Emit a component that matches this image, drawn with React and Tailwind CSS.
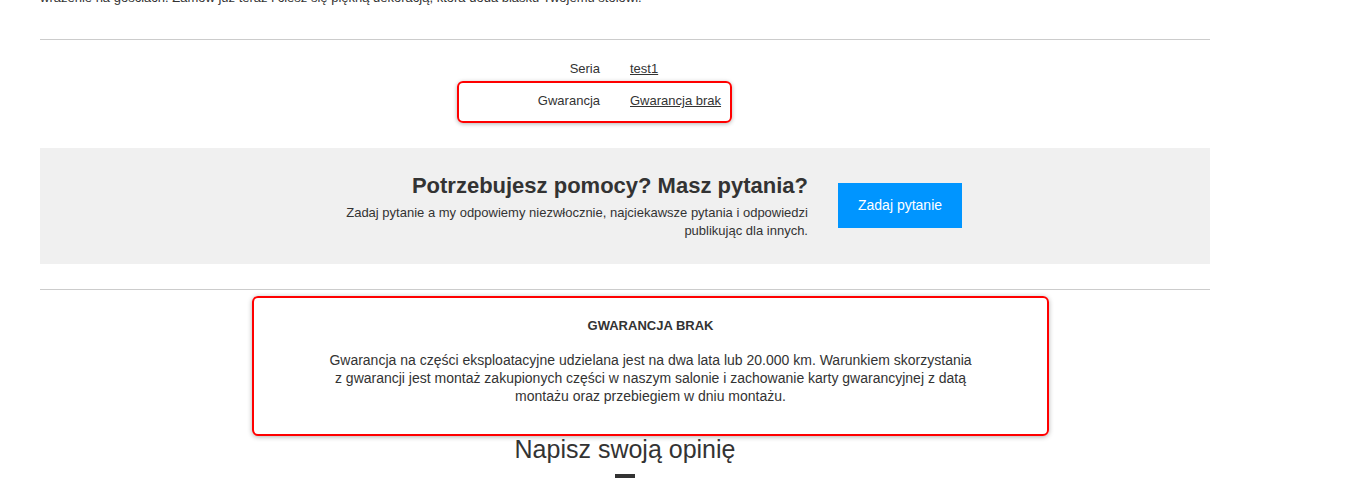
export default function App() {
  return (
    <div className="w-[1346px] h-[494px] overflow-hidden bg-white text-[#333] font-[family-name:Liberation_Sans,Arial,sans-serif]">
      <div className="w-[1170px] ml-[40px]">
        <p className="text-[13px] leading-[18px] -mt-[11px] h-[18px]">wrażenie na gościach. Zamów już teraz i ciesz się piękną dekoracją, która doda blasku Twojemu stołowi.</p>
        <div className="mt-[32px] border-t border-[#ccc]" />
        <div className="flex flex-col items-center pt-[20px]">
          <div className="grid grid-cols-[110px_130px] gap-x-[30px] gap-y-[14px] text-[13px] leading-[18px] relative">
            <span className="text-right">Seria</span>
            <a className="underline">test1</a>
            <span className="text-right">Gwarancja</span>
            <a className="underline">Gwarancja brak</a>
            <div className="absolute left-[-33px] top-[21px] w-[275px] h-[42px] border-2 border-[#f00] rounded-[6px] shadow-[0_1px_4px_rgba(0,0,0,0.3)]" />
          </div>
        </div>
        <div className="mt-[38px] bg-[#f0f0f0] h-[116px] flex items-center justify-center gap-[30px] pl-[50px]">
          <div className="text-right w-[470px]">
            <h2 className="text-[22px] font-bold leading-[28px]">Potrzebujesz pomocy? Masz pytania?</h2>
            <p className="text-[13px] leading-[18px] mt-[4px]">Zadaj pytanie a my odpowiemy niezwłocznie, najciekawsze pytania i odpowiedzi publikując dla innych.</p>
          </div>
          <button className="bg-[#0095ff] text-white text-[14px] h-[45px] px-[20px] mt-[-2px]">Zadaj pytanie</button>
        </div>
        <div className="mt-[25px] border-t border-[#ccc]" />
        <div className="ml-[212px] mt-[6px] w-[797px] h-[140px] border-2 border-[#f00] rounded-[6px] shadow-[0_1px_5px_rgba(0,0,0,0.3)] flex flex-col items-center text-center">
          <h3 className="text-[13px] font-bold mt-[18px]">GWARANCJA BRAK</h3>
          <p className="text-[14px] leading-[18px] mt-[15px] w-[650px]">Gwarancja na części eksploatacyjne udzielana jest na dwa lata lub 20.000 km. Warunkiem skorzystania z gwarancji jest montaż zakupionych części w naszym salonie i zachowanie karty gwarancyjnej z datą montażu oraz przebiegiem w dniu montażu.</p>
        </div>
        <h2 className="text-center text-[25px] leading-[30px] mt-[-2px]">Napisz swoją opinię</h2>
        <div className="mx-auto w-[20px] h-[4px] bg-[#333] mt-[10px]" />
      </div>
    </div>
  );
}
